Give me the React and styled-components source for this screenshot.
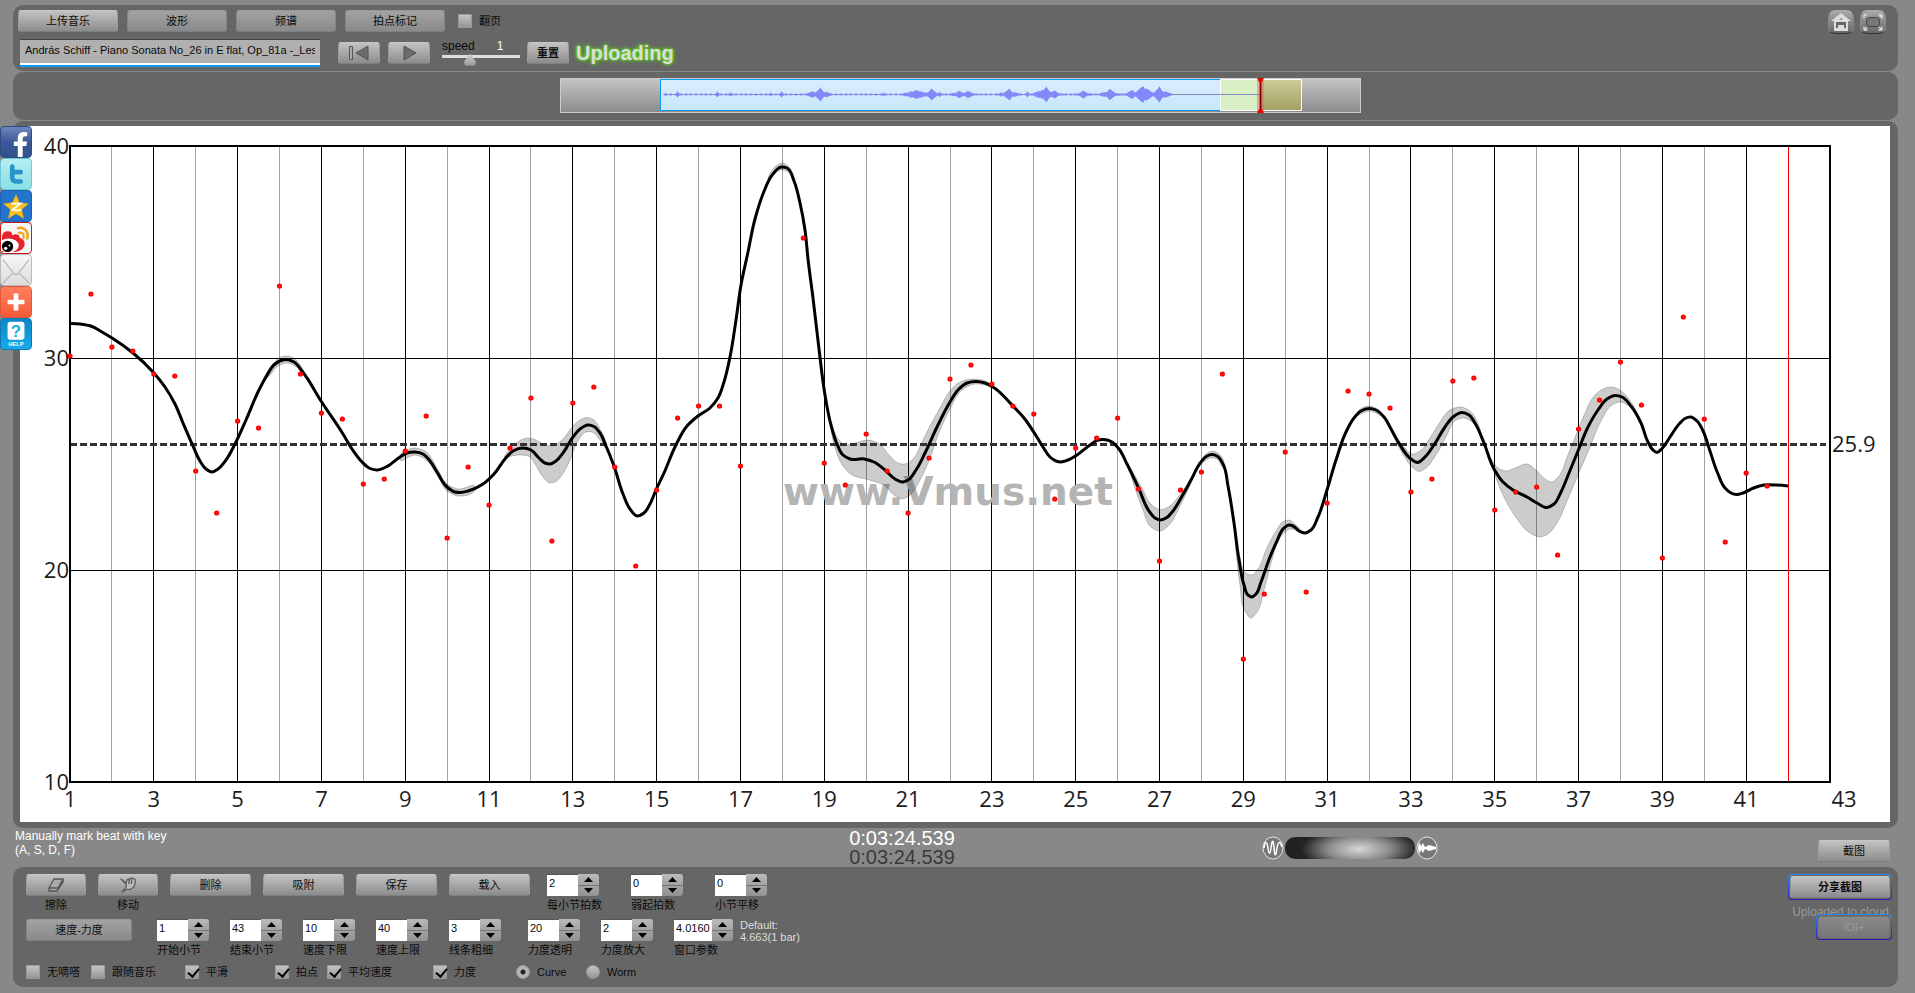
import React, { useState } from 'react'
import styled, { createGlobalStyle } from 'styled-components'
import { FaFacebookF } from 'react-icons/fa'

// [x, y] of the smoothed tempo curve
const CURVE = [
  [70, 323.5], [80, 324], [92, 326.5], [102, 332], [112, 338], [133, 353], [153, 372], [165, 387], [175, 404],
  [183, 423], [193, 446], [200, 461], [206, 469], [212, 472], [218, 469], [226, 460], [235, 444], [246, 420],
  [258, 392], [266, 377], [275, 364], [281, 360.5], [287, 359.5], [294, 362], [302, 371], [321, 401], [343, 434],
  [352, 449], [362, 462], [369, 468], [377, 470], [386, 467], [400, 457], [407, 453], [415, 452], [423, 454],
  [430, 461], [437, 472], [447, 487], [455, 492], [460, 492.5], [468, 491], [483, 484], [494, 474], [505, 459],
  [513, 451], [522, 448], [531, 450], [539, 458], [545, 463], [550, 464], [556, 461], [563, 453], [573, 437],
  [580, 429], [588, 425], [594, 426.5], [600, 433], [606, 446], [614, 466], [623, 494], [630, 509], [637, 516],
  [644, 513], [650, 504], [656, 490], [664, 473], [675, 447], [687, 426], [698, 416], [710, 408], [718, 398],
  [724, 382], [730, 357], [736, 320], [741, 285], [748, 252], [755, 219], [763, 194], [773, 174], [781, 167],
  [787, 168], [794, 181], [800, 203], [805, 230], [808, 259], [813, 298], [819, 349], [825, 395], [831, 425],
  [837, 444], [843, 455], [850, 459], [864, 459], [874, 462], [886, 471], [895, 479], [903, 482], [908, 480],
  [916, 470], [925, 453], [937, 427], [950, 402], [958, 390], [967, 383], [976, 381.5], [985, 383], [993, 387],
  [1012, 405], [1024, 418], [1035, 434], [1043, 447], [1050, 457], [1056, 461], [1061, 462], [1068, 460],
  [1077, 455], [1090, 445], [1098, 440], [1104, 439.5], [1112, 442], [1119, 449], [1127, 464], [1139, 489],
  [1149, 511], [1155, 518], [1160, 520], [1166, 518], [1173, 511], [1181, 498], [1191, 480], [1201, 462],
  [1207, 456], [1212, 454.5], [1217, 456], [1223, 464], [1228, 486], [1234, 523], [1239, 560], [1244, 585],
  [1248, 595], [1252, 597], [1256, 594], [1261, 582], [1270, 557], [1277, 541], [1284, 528], [1289, 525],
  [1293, 526], [1299, 531], [1305, 533], [1311, 530], [1318, 517], [1327, 490], [1336, 460], [1346, 432],
  [1354, 418], [1361, 411], [1369, 408.5], [1376, 410], [1384, 417], [1391, 429], [1400, 445], [1411, 459],
  [1417.5, 462.5], [1424, 458], [1434.6, 444], [1445, 427], [1453, 417], [1462, 412.5], [1469, 415], [1475.5, 424],
  [1484, 443], [1494, 469], [1503, 482], [1513, 490], [1527, 497], [1537, 503], [1547, 507.5], [1554, 504],
  [1561, 492], [1569, 473], [1578, 451], [1588, 427], [1598, 410], [1607, 399], [1615.5, 395.5], [1622, 397],
  [1631, 406], [1641, 423], [1648, 442], [1653, 450], [1657, 452.5], [1661.5, 449], [1670, 437], [1680, 423],
  [1685, 418.5], [1691, 417], [1697, 421], [1703.5, 432], [1709, 448], [1718, 474], [1725, 488], [1731, 493],
  [1736.5, 494.5], [1743, 493], [1753.6, 488], [1764, 485], [1776, 485], [1788, 486],
]

// loudness bands around the curve: upper edge left to right, lower edge back
const BANDS = [
  [[262, 383], [272, 365], [281, 357], [288, 356], [295, 359], [304, 373], [295, 366], [287, 363], [278, 366], [270, 375]],
  [[400, 455], [407, 450], [415, 448], [425, 451], [437, 468], [447, 484], [458, 489], [475, 487], [475, 489], [458, 496], [447, 491], [437, 475], [425, 459], [415, 455], [400, 460]],
  [[505, 458], [516, 443], [528, 438], [536, 440], [545, 445], [553, 446], [562, 440], [573, 426], [580, 420], [587, 417.5], [594, 420], [600, 429], [606, 444], [606, 448], [600, 440], [592, 432], [586, 432], [578, 441], [570, 460], [562, 475], [555, 482], [549, 482.5], [543, 477], [535, 464], [530, 457], [522, 455], [512, 456]],
  [[768, 179], [776, 166], [783, 163], [789, 167], [795, 181], [787, 171], [780, 170]],
  [[831, 424], [839, 440], [845, 445], [855, 443], [868, 440], [878, 443], [890, 456], [898, 463], [905, 464], [913, 459], [922, 442], [931, 424], [940, 408], [950, 391], [960, 382], [973, 379], [985, 381], [996, 389], [985, 385], [975, 384], [962, 390], [950, 409], [940, 430], [930, 458], [920, 480], [910, 495], [902, 499], [894, 495], [884, 485], [876, 482], [866, 479], [852, 475], [843, 466], [836, 451]],
  [[1130, 468], [1143, 490], [1150, 503], [1160, 509.5], [1170, 506], [1178, 497], [1192, 479], [1178, 510], [1170, 524], [1160, 531], [1151, 527], [1143, 510]],
  [[1199, 465], [1205, 455], [1212, 451], [1218, 453], [1224, 464], [1223, 467], [1217, 459], [1211, 458]],
  [[1234, 518], [1240, 557], [1246, 573], [1252, 575], [1258, 569], [1266, 550], [1276, 531], [1284, 521], [1289, 520], [1296, 525], [1302, 532], [1290, 529], [1282, 535], [1272, 560], [1264, 590], [1257, 612], [1251, 618], [1245, 611], [1240, 585]],
  [[1354, 417], [1362, 408], [1369, 406], [1377, 409], [1384, 417], [1370, 411]],
  [[1391, 428], [1404, 447], [1412, 454], [1420, 451], [1430, 438], [1440, 422], [1450, 410], [1461, 407], [1470, 411], [1480, 431], [1472, 422], [1464, 418], [1456, 420], [1446, 437], [1434, 458], [1426, 468], [1419, 471.5], [1412, 467], [1404, 456]],
  [[1490, 457], [1498, 468], [1506, 471], [1515, 468], [1527, 464], [1536, 470], [1545, 479], [1552, 482], [1559, 476], [1567, 457], [1576, 435], [1585, 413], [1595, 395], [1603, 389], [1612, 387], [1620, 390], [1628, 398], [1641, 422], [1630, 407], [1620, 402], [1612, 405], [1602, 419], [1590, 447], [1578, 475], [1567, 501], [1557, 523], [1548, 534], [1540, 537], [1530, 533], [1515, 516], [1504, 497], [1496, 478]],
]

// one beat every half bar, null where the beat leaves the chart
const BEATS = [
  356, 294, 347, 351, 374, 376, 471, 513, 421, 428, 286, 374, 413, 419, 484, 479, 451, 416, 538, 467, 505,
  448, 398, 541, 403, 387, 467, 566, 490, 418, 406, 406, 466, null, null, 238, 463, 485, 434, 471, 513, 458,
  379, 365, 384, 406, 414, 499, 448, 438, 418, 489, 561, 490, 472, 374, 659, 594, 452, 592, 503, 391, 394,
  408, 492, 479, 381, 378, 510, 492, 487, 555, 429, 400, 362, 405, 558, 317, 419, 542, 473, 486,
]

// [x, height] of the loud places in the recording
const PEAKS = [
  [105, 2], [117, 3], [157, 3], [170, 3], [210, 2], [221, 3], [253, 4], [260, 7], [267, 3], [323, 2], [350, 4],
  [357, 6], [371, 6], [379, 3], [398, 4], [407, 4], [441, 3], [449, 6], [467, 3], [481, 6], [486, 8], [494, 4],
  [523, 4], [542, 2], [549, 6], [572, 5], [583, 11], [588, 5], [599, 8], [604, 4],
]

const barX = bar => 70 + ((bar - 1) * 1760) / 42

// the tangents are weighted by distance, the points are not evenly spaced
const smooth = (points, closed) => {
  const n = points.length
  const at = i => (closed ? points[(i + n) % n] : points[Math.max(0, Math.min(n - 1, i))])
  const dist = (a, b) => Math.hypot(b[0] - a[0], b[1] - a[1]) || 1
  const tangent = (i, k) => {
    const d0 = dist(at(i - 1), at(i))
    const d1 = dist(at(i), at(i + 1))
    return (((at(i)[k] - at(i - 1)[k]) / d0) * d1 + ((at(i + 1)[k] - at(i)[k]) / d1) * d0) / (d0 + d1)
  }
  let d = `M${points[0].join(' ')}`
  for (let i = 0; i < (closed ? n : n - 1); i++) {
    const [b, c] = [at(i), at(i + 1)]
    const third = dist(b, c) / 3
    const j = closed ? (i + 1) % n : i + 1
    d += `C${[
      b[0] + tangent(i, 0) * third,
      b[1] + tangent(i, 1) * third,
      c[0] - tangent(j, 0) * third,
      c[1] - tangent(j, 1) * third,
      c[0],
      c[1],
    ].map(v => v.toFixed(2)).join(' ')}`
  }
  return d
}

const wavePath = () => {
  let d = ''
  for (let x = 103; x < 612; x++) {
    const loud = PEAKS.reduce((max, [px, h]) => Math.max(max, h * Math.exp(-Math.abs(x - px) / (h > 3 ? 6 : 2))), 0)
    const jitter = 0.6 + 0.4 * Math.abs(Math.sin(x * 12.9))
    const h = Math.max(x % 5 < 2 ? 1 : 0.5, loud * jitter)
    d += `M${x}.5 ${16.5 - h}V${16.5 + h}`
  }
  return d
}

const Chart = () => (
  <ChartSvg viewBox="20 126 1870 696" role="img" aria-label="Tempo curve">
    <rect x="20" y="126" width="1870" height="696" fill="#fff" />
    {Array.from({ length: 41 }, (_, i) => i + 2).map(bar => (
      bar !== 42 && (
        <line key={bar} x1={Math.floor(barX(bar)) + 0.5} x2={Math.floor(barX(bar)) + 0.5} y1="146" y2="782" stroke={bar % 2 ? '#000' : '#a0a0a0'} />
      )
    ))}
    <path d="M70 358.5H1830M70 570.5H1830" stroke="#000" />
    <text x="783" y="505" className="mark">www.Vmus.net</text>
    {BANDS.map((band, i) => (
      <path key={i} d={smooth(band, true)} fill="#000" fillOpacity=".2" stroke="#000" strokeOpacity=".2" />
    ))}
    <path d="M70 444.5H1826" stroke="#333" strokeWidth="3" strokeDasharray="7 3" />
    <path d={smooth(CURVE)} fill="none" stroke="#000" strokeWidth="3" strokeLinejoin="round" />
    <rect x="70" y="146" width="1760" height="636" fill="none" stroke="#000" strokeWidth="2" />
    <path d="M1788.5 147V781" stroke="#f00" />
    {BEATS.map((y, i) => y && (
      <circle key={i} cx={barX(1 + i / 2)} cy={y} r="1.6" fill="#f66" stroke="#f00" strokeWidth="2" />
    ))}
    {[40, 30, 20, 10].map((v, i) => (
      <text key={v} x="69" y={154 + i * 212} textAnchor="end">{v}</text>
    ))}
    {Array.from({ length: 22 }, (_, i) => 1 + i * 2).map(bar => (
      <text key={bar} x={bar === 43 ? 1844 : barX(bar)} y="807" textAnchor="middle">{bar}</text>
    ))}
    <text x="1832" y="452">25.9</text>
  </ChartSvg>
)

const Overview = () => (
  <svg width="801" height="35" viewBox="0 0 801 35" role="img" aria-label="Recording overview">
    <defs>
      <linearGradient id="track" x2="0" y2="1">
        <stop stopColor="#c6c6c6" />
        <stop offset="1" stopColor="#8a8a8a" />
      </linearGradient>
      <linearGradient id="sky" x2="0" y2="1">
        <stop stopColor="#d8edfb" />
        <stop offset="1" stopColor="#c6e8fc" />
      </linearGradient>
      <linearGradient id="olive" x2="0" y2="1">
        <stop stopColor="#cdcb94" />
        <stop offset="1" stopColor="#a3a066" />
      </linearGradient>
    </defs>
    <rect x=".5" y=".5" width="800" height="34" fill="url(#track)" stroke="#ccc" />
    <rect x="101" y="2" width="600" height="31" fill="url(#sky)" />
    <path d="M661 1.500H100.500V32.500H661" fill="none" stroke="#0a9bf5" />
    <rect x="660" y="2" width="41" height="31" fill="#d9f0c6" />
    <rect x="701" y="2" width="40" height="31" fill="url(#olive)" />
    <path d="M741 1.5H660.500V32.500H741.500V1.500" fill="none" stroke="#fff" />
    <path d={wavePath()} stroke="#8488f8" />
    <path d="M612 16.500H700" stroke="#8488c0" />
    <path d="M698 2V33M703 2V33" stroke="#e66" strokeWidth="2" opacity=".5" />
    <path d="M700.500 1V34" stroke="#700" strokeWidth="2" />
    <path d="M697 0h7l-2 4h-3zM697 35h7l-2-4h-3z" fill="#e00" />
  </svg>
)

const Spinner = ({ label, value, wide }) => {
  const [current, setCurrent] = useState(value)
  const step = by => setCurrent(String(Number(current) + by))

  return (
    <SpinnerLabel>
      <SpinnerBox $wide={wide}>
        <input aria-label={label} value={current} onChange={e => setCurrent(e.target.value)} />
        <span>
          <StepButton aria-label={`${label} +`} onClick={() => step(1)}>
            <svg width="9" height="5"><path d="M0 5L4.500 0L9 5z" /></svg>
          </StepButton>
          <StepButton aria-label={`${label} -`} onClick={() => step(-1)}>
            <svg width="9" height="5"><path d="M0 0L4.500 5L9 0z" /></svg>
          </StepButton>
        </span>
      </SpinnerBox>
      <Caption>{label}</Caption>
    </SpinnerLabel>
  )
}

const Choice = ({ label, width, type = 'checkbox', ...rest }) => (
  <ChoiceLabel $width={width}>
    <input type={type} {...rest} />
    {label}
  </ChoiceLabel>
)

const StarIcon = () => (
  <svg viewBox="0 0 32 32">
    <path d="M16 4l3.800 8.500 9.200 1-7 6.200 2 9.300-8-4.800L8 29l2-9.300-7-6.200 9.200-1z" fill="#fcc21c" stroke="#e9a50e" strokeWidth=".6" />
    <path d="M11 13.500h10l-9 6.500c3 1 6 1 10 0" fill="none" stroke="#fff" strokeWidth="1.800" />
  </svg>
)

const WeiboIcon = () => (
  <svg viewBox="0 0 32 32">
    <path d="M1 14c1-4 4-6 8-5 2 0 3 2 3 4 4-2 8-1 8 3 4 1 6 4 5 8-1 4-6 7-12 7H1z" fill="#e6232d" />
    <ellipse cx="8" cy="24" rx="11" ry="7.500" fill="#fff" />
    <circle cx="7" cy="25" r="6" fill="#000" />
    <circle cx="5" cy="27" r="1.800" fill="#fff" />
    <circle cx="9" cy="24" r="1" fill="#fff" />
    <path d="M18 5.500c7-2 12 4 10 11" fill="none" stroke="#f9a01b" strokeWidth="2.600" strokeLinecap="round" />
    <path d="M19 10.500c4-1 6 2 5 5.500" fill="none" stroke="#f9a01b" strokeWidth="2.400" strokeLinecap="round" />
  </svg>
)

const ShareBar = () => (
  <ShareList aria-label="Share">
    <ShareLink href="#facebook" aria-label="Facebook" $bg="linear-gradient(#6d87bd, #3b5998 50%, #34508c)" $edge="#2f4a85">
      <FaFacebookF size={25} color="#fff" />
    </ShareLink>
    <ShareLink href="#twitter" aria-label="Twitter" $bg="linear-gradient(#b5eef0, #8be0e6)" $edge="#6cc9d3">
      <svg viewBox="0 0 32 32">
        <path d="M12 8v12q0 4 5 4h4M12 14h9" fill="none" stroke="#2a95c9" strokeWidth="5" strokeLinecap="round" />
      </svg>
    </ShareLink>
    <ShareLink href="#qzone" aria-label="QZone" $bg="#2473cc" $edge="#1b62b5"><StarIcon /></ShareLink>
    <ShareLink href="#weibo" aria-label="Weibo" $bg="#f6f6f6" $edge="#c8181e"><WeiboIcon /></ShareLink>
    <ShareLink href="#mail" aria-label="Mail" $bg="linear-gradient(#f6f6f6, #dcdcdc)" $edge="#bbb">
      <svg viewBox="0 0 32 32" fill="none" stroke="#b4b4b4" strokeWidth="1.200">
        <path d="M2 30l10-10M30 30L20 20" />
        <path d="M2 5l12 15q2 2 4 0L30 5" />
      </svg>
    </ShareLink>
    <ShareLink href="#more" aria-label="More" $bg="linear-gradient(#ff7d5e, #f65a38)" $edge="#e2573a">
      <svg viewBox="0 0 32 32"><path d="M16 7v18M7 16h18" stroke="#fff" strokeWidth="5" /></svg>
    </ShareLink>
    <ShareLink href="#help" aria-label="Help" $bg="linear-gradient(#0d86c8, #19a9e6)" $edge="#0a78b5">
      <svg viewBox="0 0 32 32">
        <rect x="7" y="3" width="18" height="19" rx="3" fill="#fff" />
        <text x="16" y="19" textAnchor="middle" fontSize="18" fontWeight="700" fill="#18b0e0">?</text>
        <text x="16" y="29" textAnchor="middle" fontSize="6" fontWeight="700" fill="#fff">HELP</text>
      </svg>
    </ShareLink>
  </ShareList>
)

const App = () => {
  const [mode, setMode] = useState('Curve')

  return (
    <Page>
      <GlobalStyle />
      <TopPanel>
        <Tools>
          <ToolRow $gap={9}>
            <Button $width={100}>上传音乐</Button>
            <Button $width={100} $dim>波形</Button>
            <Button $width={100} $dim>频谱</Button>
            <Button $width={100} $dim>拍点标记</Button>
            <PageTurn><Choice label="翻页" /></PageTurn>
          </ToolRow>
          <ToolRow $gap={7}>
            <FileField>
              <input aria-label="File" readOnly value="András Schiff - Piano Sonata No_26 in E flat, Op_81a -_Les" />
            </FileField>
            <Transport>
              <Button $width={42} aria-label="Back to start">
                <svg width="22" height="16" stroke="#555">
                  <path d="M1.500 1.500h3v13h-3z" fill="#aaa" />
                  <path d="M20 1L8 8L20 15z" fill="#6b6b6b" />
                </svg>
              </Button>
              <Button $width={42} aria-label="Play">
                <svg width="22" height="16"><path d="M6 1L18 8L6 15z" fill="#6b6b6b" stroke="#555" /></svg>
              </Button>
            </Transport>
            <Speed>
              <span>speed <b>1</b></span>
              <input type="range" min="0" max="3" step="0.1" defaultValue="1" />
            </Speed>
            <Button $width={42} $bold>重置</Button>
            <Uploading>Uploading</Uploading>
          </ToolRow>
        </Tools>
        <WindowButtons>
          <IconButton aria-label="Home">
            <svg width="22" height="20" viewBox="0 0 22 20">
              <path d="M11 1L1 9h3v10h14V9h3z" fill="#ddd" />
              <path d="M6 10h10v6h-2v-3H8v3H6z" fill="#666" />
              <path d="M9 7.500l2-1.500 2 1.500z" fill="#777" />
            </svg>
          </IconButton>
          <IconButton aria-label="Full screen">
            <svg width="24" height="20" viewBox="0 0 24 20" fill="none">
              <rect x="5.500" y="5.500" width="13" height="9" rx="3" fill="#777" stroke="#444" />
              <path d="M3 18h3.500M3 18v-3.500M3 18l3-3M21 18h-3.500M21 18v-3.500M21 18l-3-3M21 3h-3.500M21 3v3.500M21 3l-2 2M3 3h3M3 3v3" stroke="#ddd" strokeWidth="1.300" />
            </svg>
          </IconButton>
        </WindowButtons>
      </TopPanel>

      <OverviewPanel><Overview /></OverviewPanel>

      <ChartPanel>
        <Chart />
        <ShareBar />
      </ChartPanel>

      <StatusBar>
        <Hint>Manually mark beat with key<br />(A, S, D, F)</Hint>
        <Clock>
          <span>0:03:24.539</span>
          <span>0:03:24.539</span>
        </Clock>
        <StatusRight>
          <Mixer>
            <svg width="22" height="24" fill="none" stroke="#e4e4e4">
              <ellipse cx="11" cy="12" rx="10" ry="11" fill="#777" />
              <path d="M2 12C3 5 5 5 6 12S8 19 9 12S11 1 12 12S14 19 15 12S18 5 20 11" stroke="#fff" strokeWidth="1.500" />
            </svg>
            <input type="range" aria-label="Mix" defaultValue="56" />
            <svg width="22" height="24">
              <ellipse cx="11" cy="12" rx="10" ry="11" fill="#777" stroke="#e4e4e4" />
              <path d="M2 12L3 6L5 10L7 7L9 11L13 9L20 11V13L13 15L9 13L7 17L5 14L3 18z" fill="#fff" />
            </svg>
          </Mixer>
          <Button $width={72}>截图</Button>
        </StatusRight>
      </StatusBar>

      <BottomPanel>
        <Controls>
          <ControlRow>
            <Stack>
              <Button $width={60} aria-label="擦除">
                <svg width="18" height="16" fill="#aaa" stroke="#555" strokeWidth="1.300">
                  <path d="M2 11L7 2H16L11 11zM2 11v3h8l1-3M16 2v3l-6 9" />
                </svg>
              </Button>
              <Caption>擦除</Caption>
            </Stack>
            <Stack>
              <Button $width={60} aria-label="移动">
                <svg width="18" height="16" fill="#bbb" stroke="#555" strokeWidth="1.200" strokeLinejoin="round">
                  <path d="M2 2L7 6L8 3Q9 1 10 3Q11 0 12.500 2Q14 0 15 2Q17 2 16 6Q16 10 12 12Q10 13 8 12L3 15L7 10Q8 8 7 7z" />
                  <path d="M10 3v4M12.500 2v5" fill="none" />
                </svg>
              </Button>
              <Caption>移动</Caption>
            </Stack>
            <Button $width={81}>删除</Button>
            <Button $width={81}>吸附</Button>
            <Button $width={81}>保存</Button>
            <Button $width={81}>载入</Button>
            <SpinnerGroup $gap={32} $before={5}>
              <Spinner label="每小节拍数" value="2" />
              <Spinner label="弱起拍数" value="0" />
              <Spinner label="小节平移" value="0" />
            </SpinnerGroup>
          </ControlRow>
          <ControlRow>
            <Button $width={106} $dim>速度-力度</Button>
            <SpinnerGroup $gap={21} $before={13}>
              <Spinner label="开始小节" value="1" />
              <Spinner label="结束小节" value="43" />
              <Spinner label="速度下限" value="10" />
              <Spinner label="速度上限" value="40" />
              <Spinner label="线条粗细" value="3" />
            </SpinnerGroup>
            <SpinnerGroup $gap={21} $before={15}>
              <Spinner label="力度透明" value="20" />
              <Spinner label="力度放大" value="2" />
              <Spinner label="窗口参数" value="4.0160" wide />
            </SpinnerGroup>
            <Default>Default:<br />4.663(1 bar)</Default>
          </ControlRow>
          <ChoiceRow>
            <Choice label="无嘀嗒" width={65} />
            <Choice label="跟随音乐" width={94} />
            <Choice label="平滑" width={90} defaultChecked />
            <Choice label="拍点" width={52} defaultChecked />
            <Choice label="平均速度" width={106} defaultChecked />
            <Choice label="力度" width={83} defaultChecked />
            {['Curve', 'Worm'].map(name => (
              <Choice key={name} type="radio" name="mode" label={name} width={70} checked={mode === name} onChange={() => setMode(name)} />
            ))}
          </ChoiceRow>
        </Controls>
        <Upload>
          <Framed><Button $width={100} $bold>分享截图</Button></Framed>
          <p>Uploaded to cloud</p>
          <Framed $over><Button $width={72} disabled>IOI+</Button></Framed>
        </Upload>
      </BottomPanel>
    </Page>
  )
}

export default App

const GlobalStyle = createGlobalStyle`
  * {
    box-sizing: border-box;
  }

  body {
    margin: 0;
    background: #888;
    font-family: 'Liberation Sans', 'Noto Sans CJK SC', sans-serif;
    font-size: 11px;
    color: #0b0b0b;
  }

  button, input {
    font: inherit;
    color: inherit;
    margin: 0;
  }

  p {
    margin: 0;
  }
`

const Page = styled.div`
  display: flex;
  flex-direction: column;
  gap: 1px;
  padding: 5px 17px 7px 13px;
`

const Panel = styled.section`
  background: #666;
  border-radius: 10px;
`

const TopPanel = styled(Panel)`
  display: flex;
  justify-content: space-between;
  padding: 5px 12px 4px 5px;
`

const Tools = styled.div`
  display: flex;
  flex-direction: column;
  gap: 7px;
`

const ToolRow = styled.div`
  display: flex;
  align-items: center;
  gap: ${({ $gap }) => $gap}px;
`

const Button = styled.button`
  display: flex;
  flex: none;
  align-items: center;
  justify-content: center;
  width: ${({ $width }) => $width}px;
  height: 22px;
  padding: 0;
  border: 1px solid;
  border-color: ${({ $dim }) => ($dim ? '#999 #858585 #7b8085' : '#c8c8c8 #999 #7b8085')};
  border-radius: 3px;
  background: ${({ $dim }) => ($dim ? 'linear-gradient(#a2a2a2, #8a8a8a)' : 'linear-gradient(#c2c2c2, #8c8c8c)')};
  font-weight: ${({ $bold }) => ($bold ? 700 : 400)};
  line-height: 16px;

  &:disabled {
    border-color: #777;
    background: linear-gradient(#8a8a8a, #777);
    color: #999;
  }
`

const PageTurn = styled.div`
  padding-left: 4px;
`

const FileField = styled.label`
  width: 300px;
  height: 28px;
  margin-left: 2px;
  border-top: 1px solid #444;
  border-bottom: 2px solid #0a9bf5;
  background: #b0b0b0;

  input {
    display: block;
    width: 100%;
    height: 25px;
    padding: 0 5px 4px;
    border: 0;
    border-bottom: 2px solid #fff;
    background: none;
  }
`

const Transport = styled.div`
  display: flex;
  gap: 8px;
  padding: 0 5px 0 11px;
`

const Speed = styled.label`
  display: flex;
  flex-direction: column;
  width: 78px;
  font-size: 12px;
  line-height: 13px;

  span {
    display: flex;
    gap: 22px;
  }

  b {
    color: #fff;
    font-weight: 400;
  }

  input {
    width: 100%;
    height: 14px;
    appearance: none;
    background: linear-gradient(#ddd, #ddd) 0 2px / 100% 3px no-repeat;
  }

  input::-webkit-slider-thumb {
    appearance: none;
    width: 12px;
    height: 12px;
    background: linear-gradient(#ccc, #999);
    clip-path: polygon(50% 0, 100% 70%, 90% 100%, 10% 100%, 0 70%);
  }
`

const Uploading = styled.span`
  color: #dcdcdc;
  font-size: 20px;
  font-weight: 700;
  line-height: 24px;
  text-shadow: 0 0 2px #5fd81c, 0 0 3px #5fd81c, 0 0 5px #5fd81c;
`

const WindowButtons = styled.div`
  display: flex;
  align-items: flex-start;
  gap: 6px;
`

const IconButton = styled.button`
  display: flex;
  align-items: center;
  justify-content: center;
  width: 26px;
  height: 24px;
  padding: 0;
  border: 1px solid #888;
  border-top-color: #aaa;
  border-bottom-color: #333;
  border-radius: 7px;
  background: linear-gradient(#aaa, #666);
`

const OverviewPanel = styled(Panel)`
  display: flex;
  justify-content: center;
  padding: 6px 0 7px 10px;
`

const ChartPanel = styled(Panel)`
  position: relative;
  padding: 5px 8px 6px 7px;
`

const ChartSvg = styled.svg`
  display: block;
  width: 100%;
  height: auto;
  font-family: 'Open Sans', 'Noto Sans', sans-serif;
  font-size: 22px;
  fill: #1c1c1c;

  .mark {
    font-family: 'DejaVu Sans', sans-serif;
    font-size: 39px;
    font-weight: 700;
    fill: #b4b4b4;
  }
`

const ShareList = styled.nav`
  position: absolute;
  top: 5px;
  left: -13px;
  display: flex;
  flex-direction: column;
`

const ShareLink = styled.a`
  display: flex;
  align-items: flex-end;
  justify-content: center;
  width: 32px;
  height: 32px;
  overflow: hidden;
  border: 1px solid ${({ $edge }) => $edge};
  border-radius: 4px;
  background: ${({ $bg }) => $bg};

  svg {
    display: block;
    flex: none;
  }

  svg[viewBox='0 0 32 32'] {
    width: 30px;
    height: 30px;
  }

  &:first-child {
    padding-left: 8px;
  }
`

const StatusBar = styled.div`
  display: grid;
  grid-template-columns: 1fr auto 1fr;
  height: 37px;
`

const Hint = styled.p`
  padding-left: 2px;
  color: #fff;
  font-size: 12px;
  line-height: 14px;
`

const Clock = styled.div`
  display: flex;
  flex-direction: column;
  margin-right: 107px;
  color: #fff;
  font-size: 20px;
  line-height: 19px;

  span + span {
    color: #3a3a3a;
  }
`

const StatusRight = styled.div`
  display: flex;
  align-items: flex-end;
  justify-content: space-between;
  padding: 0 8px 5px 200px;
`

const Mixer = styled.div`
  display: flex;
  align-items: center;
  gap: 1px;
  padding-bottom: 2px;

  input {
    width: 130px;
    height: 22px;
    appearance: none;
    border-radius: 10px;
    background: radial-gradient(ellipse 58px 22px at 57% 55%, #d8d8d8, #888 55%, #222);
  }

  input::-webkit-slider-thumb {
    appearance: none;
    width: 20px;
    height: 20px;
    background: none;
  }
`

const BottomPanel = styled(Panel)`
  display: flex;
  justify-content: space-between;
  min-height: 119px;
  padding: 7px 6px 7px 13px;
`

const Controls = styled.div`
  display: flex;
  flex-direction: column;
`

const ControlRow = styled.div`
  display: flex;
  align-items: flex-start;
  gap: 12px;
  height: 45px;
`

const Stack = styled.div`
  display: flex;
  flex-direction: column;
  align-items: center;
`

const Caption = styled.span`
  padding-top: 1px;
  line-height: 16px;
  white-space: nowrap;
`

const SpinnerGroup = styled.div`
  display: flex;
  gap: ${({ $gap }) => $gap}px;
  padding-left: ${({ $before }) => $before}px;
`

const SpinnerLabel = styled.div`
  display: flex;
  flex-direction: column;
  width: 52px;
`

const SpinnerBox = styled.div`
  display: flex;
  width: ${({ $wide }) => ($wide ? 59 : 52)}px;
  height: 22px;

  input {
    flex: 1;
    min-width: 0;
    padding: 0 2px 6px;
    border: 0;
    border-top: 1px solid #555;
    background: #fff;
  }

  > span {
    display: flex;
    flex-direction: column;
    width: 21px;
  }
`

const StepButton = styled.button`
  display: flex;
  flex: 1;
  align-items: center;
  justify-content: center;
  padding: 0;
  border: 0;
  border-radius: 0 3px 0 0;
  background: linear-gradient(#bbb, #a2a2a2);

  & + & {
    border-top: 1px solid #777;
    border-radius: 0 0 3px 0;
    background: linear-gradient(#a2a2a2, #929292);
  }
`

const Default = styled.p`
  padding-left: 2px;
  color: #ddd;
  line-height: 12px;
`

const ChoiceRow = styled.div`
  display: flex;
`

const ChoiceLabel = styled.label`
  display: flex;
  align-items: center;
  gap: 7px;
  width: ${({ $width }) => ($width ? `${$width}px` : 'auto')};
  line-height: 16px;
  white-space: nowrap;

  input {
    flex: none;
    width: 14px;
    height: 14px;
    appearance: none;
    border: 1px solid #999;
    background: linear-gradient(#c4c4c4, #959595);
  }

  input[type='checkbox']:checked {
    position: relative;
  }

  input[type='checkbox']:checked::after {
    content: '';
    position: absolute;
    left: 4px;
    top: 0;
    width: 5px;
    height: 9px;
    border: solid #000;
    border-width: 0 2px 2px 0;
    transform: rotate(40deg);
  }

  input[type='radio'] {
    border-radius: 50%;
  }

  input[type='radio']:checked {
    background: radial-gradient(circle, #222 2px, #b4b4b4 3px);
  }
`

const Upload = styled.div`
  display: flex;
  flex-direction: column;
  align-items: flex-end;

  p {
    padding: 5px 3px 0 0;
    color: #999;
    font-size: 12px;
    line-height: 14px;
  }
`

const Framed = styled.div`
  padding: 1px;
  margin-top: ${({ $over }) => ($over ? -5 : 0)}px;
  border: 1px solid transparent;
  border-radius: 4px;
  background: linear-gradient(#666, #666) padding-box, linear-gradient(#2a90ff, #3a10b0) border-box;
`
